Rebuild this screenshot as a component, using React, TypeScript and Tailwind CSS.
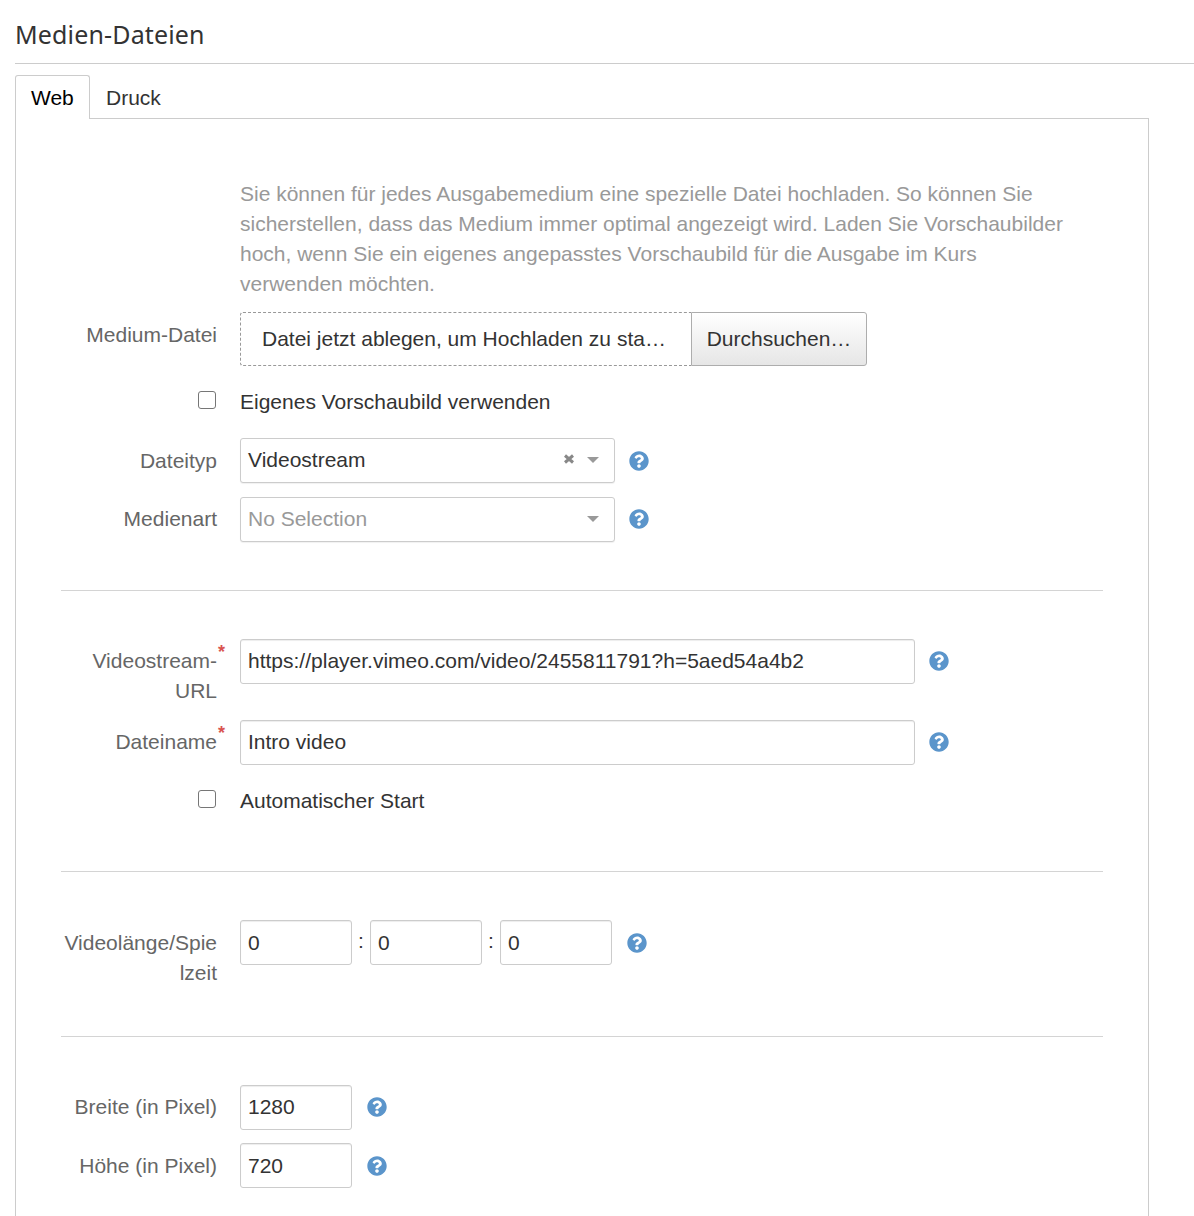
import type { ReactNode } from "react";
import { FaQuestionCircle } from "react-icons/fa";

function Help({ className = "" }: { className?: string }) {
  return <FaQuestionCircle className={`h-[20px] w-[20px] shrink-0 text-[#5b95cb] ${className}`} />;
}

function Label({ children, required = false }: { children: ReactNode; required?: boolean }) {
  return (
    <label className="relative block w-[156px] break-words pt-[7px] text-right text-[#666666]">
      {children}
      {required && (
        <span className="absolute right-[-8px] top-[3px] text-[18px] leading-[20px] font-bold text-[#d9534f]">*</span>
      )}
    </label>
  );
}

function Row({
  label,
  required,
  children,
  className = "",
}: {
  label: ReactNode;
  required?: boolean;
  children: ReactNode;
  className?: string;
}) {
  return (
    <div className={`flex items-start gap-[23px] ${className}`}>
      <Label required={required}>{label}</Label>
      {children}
    </div>
  );
}

function TextInput({ value, className = "" }: { value: string; className?: string }) {
  return (
    <div
      className={`flex h-[45px] shrink-0 items-center rounded-[3px] border border-[#cccccc] bg-white px-[7px] pb-[1px] text-[#333333] shadow-[inset_0_1px_1px_rgba(0,0,0,0.075)] ${className}`}
    >
      {value}
    </div>
  );
}

function Caret() {
  return <span className="h-0 w-0 border-x-[6px] border-t-[6px] border-x-transparent border-t-[#999999]" />;
}

function Select({ value, placeholder = false, clearable = false }: { value: string; placeholder?: boolean; clearable?: boolean }) {
  return (
    <div className="flex h-[45px] w-[375px] items-center rounded-[3px] border border-[#cccccc] bg-white pb-[1px] pl-[7px] pr-[15px] shadow-[0_1px_1px_rgba(0,0,0,0.06)]">
      <span className={`flex-1 ${placeholder ? "text-[#999999]" : "text-[#333333]"}`}>{value}</span>
      {clearable && (
        <svg viewBox="0 0 12 12" className="mb-[2px] mr-[12px] h-[12px] w-[12px] text-[#888888]">
          <path d="M2 2.5l8 7M10 2.5l-8 7" stroke="currentColor" strokeWidth="3" />
        </svg>
      )}
      <Caret />
    </div>
  );
}

function CheckRow({ label, className = "" }: { label: string; className?: string }) {
  return (
    <div className={`flex h-[30px] items-center ${className}`}>
      <input
        type="checkbox"
        readOnly
        className="ml-[182px] mr-[24px] mt-[-4px] h-[18px] w-[18px] appearance-none rounded-[3px] border border-[#767676] bg-white"
      />
      <span className="text-[#333333]">{label}</span>
    </div>
  );
}

function Divider({ className = "" }: { className?: string }) {
  return <hr className={`ml-[45px] mr-[45px] border-t border-[#d4d4d4] ${className}`} />;
}

export default function App() {
  return (
    <div className="h-[1216px] overflow-hidden bg-white pl-[15px] text-[21px] leading-[30px] font-['Liberation_Sans',Arial,sans-serif] text-[#333333]">
      <h3 className="h-[64px] border-b border-[#cccccc] pt-[19px] text-[25px] leading-[30px] tracking-[0.15px] font-['Noto_Sans',sans-serif] text-[#333333]">
        Medien-Dateien
      </h3>

      <div className="mt-[11px] flex h-[44px] w-[1134px] border-b border-[#cccccc]">
        <div className="h-[44px] w-[75px] rounded-t-[3px] border border-b-0 border-[#cccccc] bg-white pl-[15px] pt-[7px] text-black">
          Web
        </div>
        <div className="pl-[16px] pt-[8px] text-[#333333]">Druck</div>
      </div>

      <div className="h-[1100px] w-[1134px] border-x border-[#cccccc] pt-[60px]">
        <p className="ml-[224px] w-[835px] text-[#999999]">
          Sie können für jedes Ausgabemedium eine spezielle Datei hochladen. So können Sie sicherstellen, dass das Medium immer optimal angezeigt wird. Laden Sie Vorschaubilder hoch, wenn Sie ein eigenes angepasstes Vorschaubild für die Ausgabe im Kurs verwenden möchten.
        </p>

        <Row label="Medium-Datei" className="ml-[45px] mt-[13px] [&>label]:pt-[8px]">
          <div className="flex h-[54px] w-[627px]">
            <div className="flex w-[451px] items-center rounded-l-[3px] border border-r-0 border-dashed border-[#999999] pl-[21px]">
              <span className="whitespace-nowrap">Datei jetzt ablegen, um Hochladen zu sta…</span>
            </div>
            <div className="flex w-[176px] items-center justify-center rounded-r-[3px] border border-[#adadad] bg-[linear-gradient(180deg,#ffffff,#e6e6e6)] text-[#333333]">
              Durchsuchen…
            </div>
          </div>
        </Row>

        <CheckRow label="Eigenes Vorschaubild verwenden" className="mt-[21px]" />

        <Row label="Dateityp" className="ml-[45px] mt-[21px] [&>label]:pt-[8px]">
          <div className="flex items-center gap-[14px]">
            <Select value="Videostream" clearable />
            <Help />
          </div>
        </Row>

        <Row label="Medienart" className="ml-[45px] mt-[14px]">
          <div className="flex items-center gap-[14px]">
            <Select value="No Selection" placeholder />
            <Help className="mb-[2px]" />
          </div>
        </Row>

        <Divider className="mt-[48px]" />

        <Row label="Videostream-URL" required className="ml-[45px] mt-[48px]">
          <div className="flex items-center gap-[14px]">
            <TextInput value="https://player.vimeo.com/video/2455811791?h=5aed54a4b2" className="w-[675px]" />
            <Help className="mb-[2px]" />
          </div>
        </Row>

        <Row label="Dateiname" required className="ml-[45px] mt-[14px]">
          <div className="flex items-center gap-[14px]">
            <TextInput value="Intro video" className="w-[675px]" />
            <Help className="mb-[2px]" />
          </div>
        </Row>

        <CheckRow label="Automatischer Start" className="mt-[21px]" />

        <Divider className="mt-[55px]" />

        <Row label="Videolänge/Spielzeit" className="ml-[45px] mt-[48px] [&>label]:pt-[8px]">
          <div className="flex items-center">
            <TextInput value="0" className="w-[112px] pb-0!" />
            <span className="flex w-[18px] justify-center pb-[4px]">:</span>
            <TextInput value="0" className="w-[112px] pb-0!" />
            <span className="flex w-[18px] justify-center pb-[4px]">:</span>
            <TextInput value="0" className="w-[112px] pb-0!" />
            <Help className="ml-[15px]" />
          </div>
        </Row>

        <Divider className="mt-[48px]" />

        <Row label="Breite (in Pixel)" className="ml-[45px] mt-[48px]">
          <div className="flex items-center gap-[15px]">
            <TextInput value="1280" className="w-[112px]" />
            <Help className="mb-[2px]" />
          </div>
        </Row>

        <Row label="Höhe (in Pixel)" className="ml-[45px] mt-[13px] [&>label]:pt-[8px]">
          <div className="flex items-center gap-[15px]">
            <TextInput value="720" className="w-[112px] pb-0!" />
            <Help />
          </div>
        </Row>
      </div>
    </div>
  );
}
